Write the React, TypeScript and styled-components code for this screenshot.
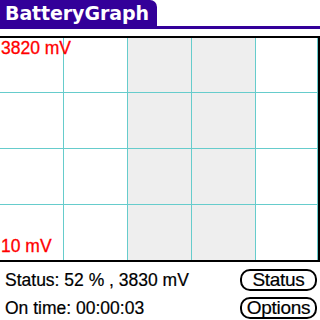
import React from 'react';
import styled, { createGlobalStyle } from 'styled-components';

const GlobalStyle = createGlobalStyle`
  html, body {
    margin: 0;
    padding: 0;
    background: #ffffff;
  }
  body {
    width: 320px;
    height: 320px;
    overflow: hidden;
    font-family: 'Liberation Sans', Arial, sans-serif;
  }
`;

const Screen = styled.div`
  width: 320px;
  height: 320px;
  display: flex;
  flex-direction: column;
  background: #ffffff;
`;

const TitleBar = styled.div`
  display: flex;
  height: 26px;
  border-bottom: 3px solid #330099;
`;

const TitleTab = styled.div`
  width: 157px;
  height: 26px;
  box-sizing: border-box;
  padding: 2px 0 0 5px;
  background: #330099;
  border-top-right-radius: 7px;
  color: #ffffff;
  font-family: 'DejaVu Sans', sans-serif;
  font-weight: bold;
  font-size: 19px;
  line-height: 23px;
  letter-spacing: -0.1px;
`;

const Graph = styled.div`
  position: relative;
  margin-top: 7px;
  display: grid;
  grid-template-columns: 63px 63px 63px 63px 61px;
  grid-template-rows: 54px 55px 55px 55px;
  gap: 1px;
  padding-right: 1px;
  background: #66cccc;
  border-top: 2px solid #000000;
  border-bottom: 2px solid #000000;
  border-right: 2px solid #000000;
`;

const Cell = styled.div<{ $shaded?: boolean }>`
  background: ${(p) => (p.$shaded ? '#eeeeee' : '#ffffff')};
`;

const ScaleLabel = styled.span<{ $bottom?: boolean }>`
  position: absolute;
  left: 1px;
  ${(p) => (p.$bottom ? 'bottom: 4px;' : 'top: 0px;')}
  color: #ff0000;
  font-size: 17.5px;
  line-height: 20px;
  -webkit-text-stroke: 0.3px #ff0000;
`;

const Footer = styled.div`
  flex: 1;
  display: grid;
  grid-template-columns: 1fr auto;
  grid-template-rows: 28px 27px;
  align-items: center;
  padding: 4px 3px 0 5px;
`;

const InfoText = styled.div`
  font-size: 17.5px;
  line-height: 20px;
  color: #000000;
  white-space: pre;
  -webkit-text-stroke: 0.2px #000000;
`;

const PalmButton = styled.div`
  width: 77px;
  height: 22px;
  box-sizing: border-box;
  border: 2px solid #000000;
  border-radius: 10px;
  display: flex;
  align-items: center;
  justify-content: center;
  font-size: 19px;
  line-height: 18px;
  letter-spacing: -0.3px;
  color: #000000;
  -webkit-text-stroke: 0.2px #000000;
`;

const columns = [false, false, true, true, false];

export default function App() {
  return (
    <>
      <GlobalStyle />
      <Screen>
        <TitleBar>
          <TitleTab>BatteryGraph</TitleTab>
        </TitleBar>
        <Graph>
          {Array.from({ length: 4 }).map((_, r) =>
            columns.map((shaded, c) => <Cell key={`${r}-${c}`} $shaded={shaded} />)
          )}
          <ScaleLabel>3820 mV</ScaleLabel>
          <ScaleLabel $bottom>10 mV</ScaleLabel>
        </Graph>
        <Footer>
          <InfoText>Status: 52 % , 3830 mV</InfoText>
          <PalmButton>Status</PalmButton>
          <InfoText>On time: 00:00:03</InfoText>
          <PalmButton>Options</PalmButton>
        </Footer>
      </Screen>
    </>
  );
}
